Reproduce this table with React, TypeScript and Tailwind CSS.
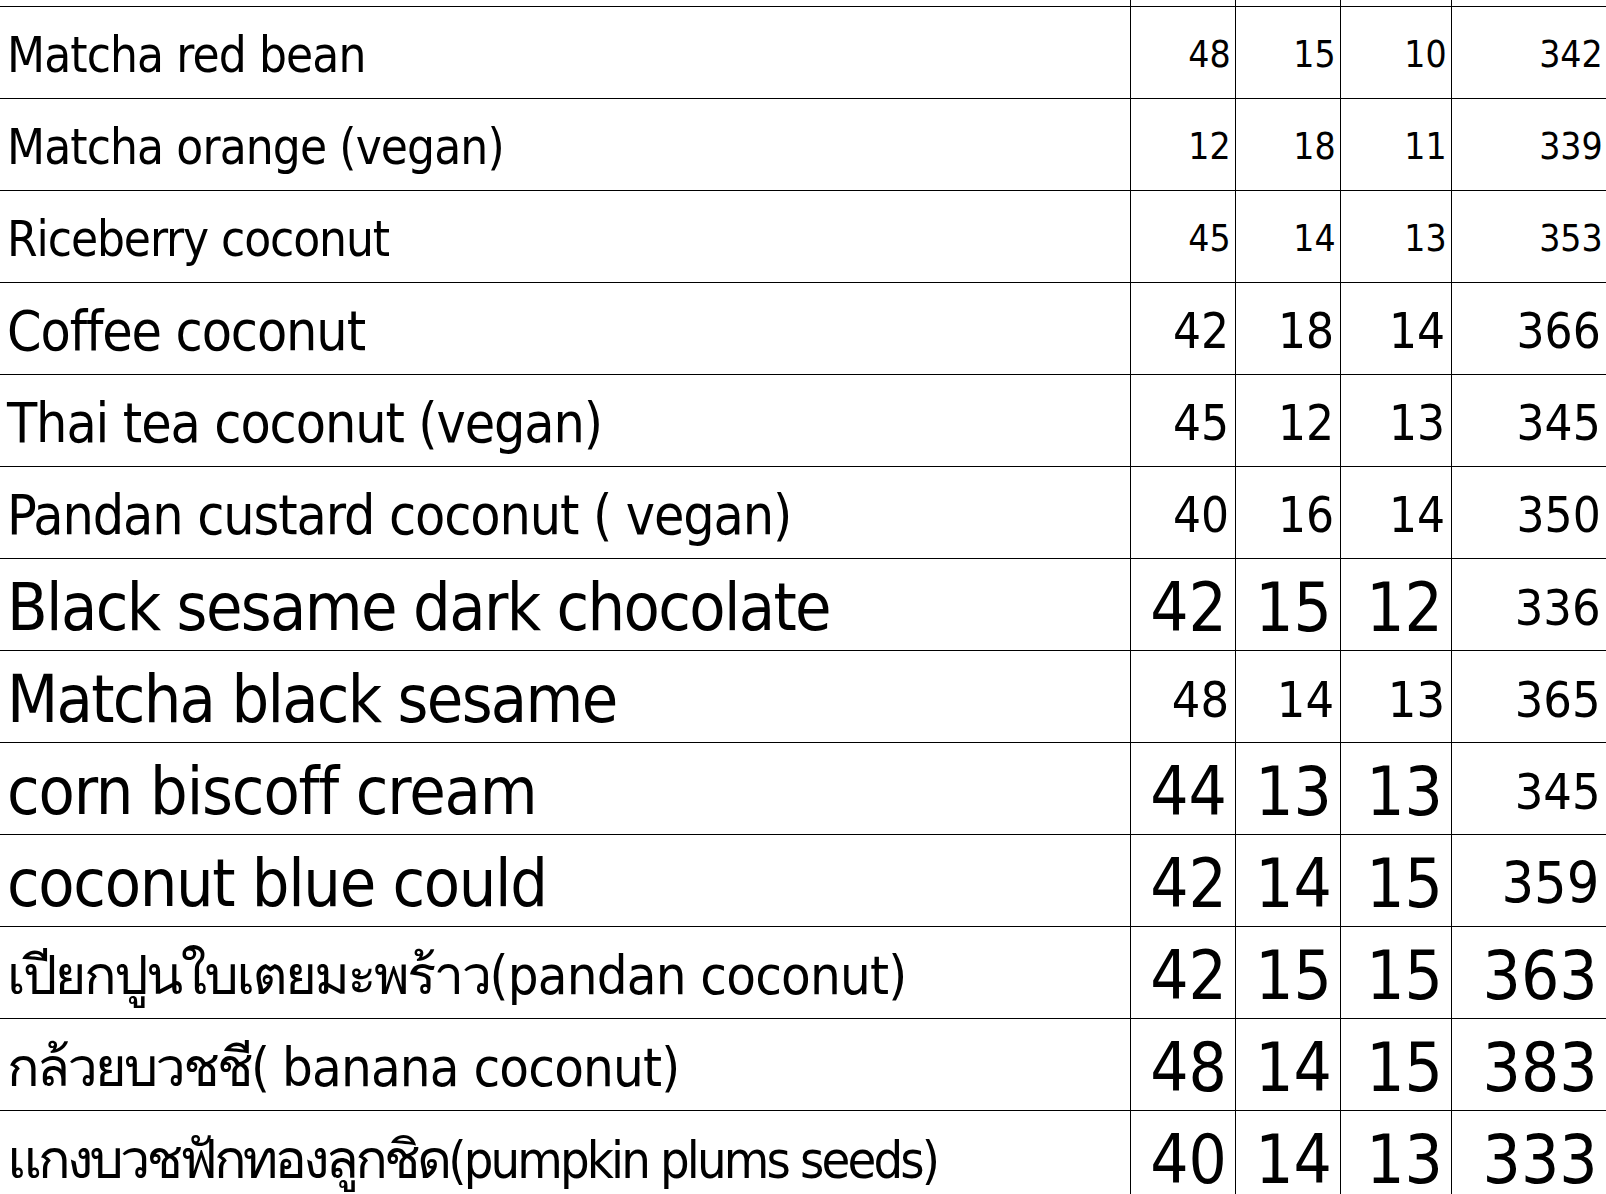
import React from "react";

type Cell = { v: string; size: string };

interface Row {
  name: React.ReactNode;
  key: string;
  nameCls: string;
  nums: Cell[];
}

const s37 = "text-[37px]";
const s49 = "text-[49px]";
const s50 = "text-[50px]";
const s57 = "text-[57px]";
const s67 = "text-[67px]";

const same = (vals: string[], size: string): Cell[] => vals.map((v) => ({ v, size }));

const rows: Row[] = [
  { key: "r1", name: "Matcha red bean", nameCls: "text-[49px] tracking-[-0.018em]", nums: same(["48", "15", "10", "342"], s37) },
  { key: "r2", name: "Matcha orange (vegan)", nameCls: "text-[49px] tracking-[-0.018em]", nums: same(["12", "18", "11", "339"], s37) },
  { key: "r3", name: "Riceberry coconut", nameCls: "text-[49px] tracking-[-0.022em]", nums: same(["45", "14", "13", "353"], s37) },
  { key: "r4", name: "Coffee coconut", nameCls: "text-[55px] tracking-[-0.02em]", nums: same(["42", "18", "14", "366"], s49) },
  { key: "r5", name: "Thai tea coconut (vegan)", nameCls: "text-[55px] tracking-[-0.02em]", nums: same(["45", "12", "13", "345"], s49) },
  { key: "r6", name: "Pandan custard coconut ( vegan)", nameCls: "text-[55px] tracking-[-0.02em]", nums: same(["40", "16", "14", "350"], s49) },
  {
    key: "r7",
    name: "Black sesame dark chocolate",
    nameCls: "text-[66px] tracking-[-0.025em]",
    nums: [...same(["42", "15", "12"], s67), { v: "336", size: s50 }],
  },
  { key: "r8", name: "Matcha black sesame", nameCls: "text-[66px] tracking-[-0.026em]", nums: same(["48", "14", "13", "365"], s50) },
  {
    key: "r9",
    name: "corn biscoff cream",
    nameCls: "text-[66px] tracking-[-0.017em]",
    nums: [...same(["44", "13", "13"], s67), { v: "345", size: s50 }],
  },
  {
    key: "r10",
    name: "coconut blue could",
    nameCls: "text-[66px] tracking-[-0.02em]",
    nums: [...same(["42", "14", "15"], s67), { v: "359", size: s57 }],
  },
  {
    key: "r11",
    name: (
      <>
        <span className="tracking-[-0.045em]">เปียกปูนใบเตยมะพร้าว</span>
        <span className="tracking-[-0.015em]">(pandan coconut)</span>
      </>
    ),
    nameCls: "text-[54px]",
    nums: same(["42", "15", "15", "363"], s67),
  },
  {
    key: "r12",
    name: (
      <>
        <span className="tracking-[-0.05em]">กล้วยบวชชี(</span>
        <span className="tracking-[-0.015em]"> banana coconut)</span>
      </>
    ),
    nameCls: "text-[54px]",
    nums: same(["48", "14", "15", "383"], s67),
  },
  {
    key: "r13",
    name: (
      <>
        <span className="tracking-[-0.07em]">แกงบวชฟักทองลูกชิด</span>
        <span className="text-[52px] tracking-[-0.055em]">(pumpkin plums seeds)</span>
      </>
    ),
    nameCls: "text-[54px]",
    nums: same(["40", "14", "13", "333"], s67),
  },
];

const grid = "grid grid-cols-[1131px_105px_105px_111px_157px] border-b border-black";

export default function App() {
  return (
    <div
      className="w-full h-[1194px] overflow-hidden bg-white text-black font-stretch-condensed"
      style={{
        fontFamily:
          '"DejaVu Sans Condensed", "DejaVu Sans", Loma, Garuda, "Tlwg Typo", "Noto Sans Thai Looped", "Noto Sans Thai", sans-serif',
      }}
    >
      <div className="w-[1609px]">
        {/* cut-off row above the first visible one */}
        <div className={`${grid} h-[7px]`}>
          <div className="border-r border-black" />
          <div className="border-r border-black" />
          <div className="border-r border-black" />
          <div className="border-r border-black" />
          <div />
        </div>

        {rows.map((r) => (
          <div key={r.key} className={`${grid} h-[92px]`}>
            <div className={`flex items-center border-r border-black pl-[7px] pt-[0.12em] leading-none whitespace-pre ${r.nameCls}`}>
              {r.name}
            </div>
            {r.nums.map((c, i) =>
              i < 3 ? (
                <div
                  key={i}
                  className={`flex items-center justify-end border-r border-black pr-[0.12em] pt-[0.12em] leading-none ${c.size}`}
                >
                  {c.v}
                </div>
              ) : (
                <div key={i} className={`flex items-center justify-end pr-[0.17em] pt-[0.12em] leading-none ${c.size}`}>
                  {c.v}
                </div>
              )
            )}
          </div>
        ))}
      </div>
    </div>
  );
}
